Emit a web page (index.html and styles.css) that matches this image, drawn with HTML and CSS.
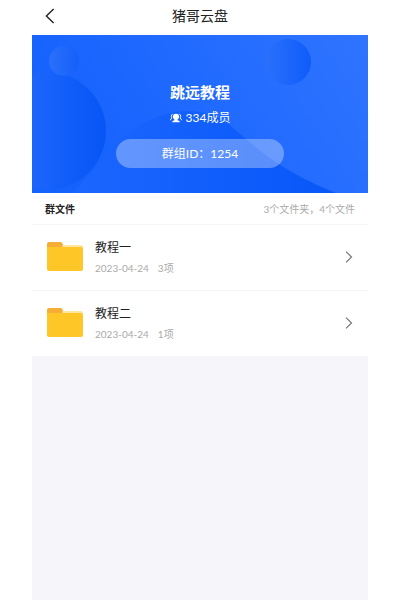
FILE: index.html
```html
<!DOCTYPE html>
<html lang="zh-CN">
<head>
<meta charset="utf-8">
<meta name="viewport" content="width=device-width, initial-scale=1">
<title>猪哥云盘</title>
<link rel="stylesheet" href="styles.css">
</head>
<body>
<div class="app">
  <header class="topbar">
    <button class="back" type="button" aria-label="返回">
      <svg width="10" height="16" viewBox="0 0 10 16" fill="none" stroke="#222" stroke-width="1.4"><path d="M8.6 1 1.4 8l7.2 7"/></svg>
    </button>
    <h1 class="title">猪哥云盘</h1>
  </header>
  <section class="banner">
    <svg class="art" viewBox="0 0 336 158" preserveAspectRatio="none" aria-hidden="true">
      <defs>
        <linearGradient id="base" x1="0" x2="1" y1="0.3" y2="0"><stop offset="0" stop-color="#1562fd"/><stop offset="0.5" stop-color="#226bff"/><stop offset="1" stop-color="#2f74ff"/></linearGradient>
        <linearGradient id="hill" x1="0" x2="1"><stop offset="0" stop-color="#1b66fe"/><stop offset="0.3" stop-color="#1762fd"/><stop offset="0.6" stop-color="#0f5dfb"/><stop offset="1" stop-color="#0a57f8"/></linearGradient>
        <linearGradient id="big" x1="0" x2="1"><stop offset="0.25" stop-color="#2069fc"/><stop offset="0.7" stop-color="#115df9"/><stop offset="1" stop-color="#0855f6"/></linearGradient>
        <linearGradient id="small" x1="0" x2="1"><stop offset="0" stop-color="#2a70fb"/><stop offset="1" stop-color="#1560fa"/></linearGradient>
        <linearGradient id="right" x1="0" x2="1"><stop offset="0" stop-color="#2a70fc"/><stop offset="1" stop-color="#0f5cfa"/></linearGradient>
      </defs>
      <rect width="336" height="158" fill="url(#base)"/>
      <path d="M40 158C60 140 78 108 110 89C140 71 176 72 198 90C224 113 248 136 304 158Z" fill="url(#hill)"/>
      <circle cx="15" cy="96" r="59" fill="url(#big)"/>
      <circle cx="32" cy="26" r="15" fill="url(#small)"/>
      <circle cx="256" cy="27" r="23" fill="url(#right)"/>
    </svg>
    <h2 class="group">跳远教程</h2>
    <p class="members">
      <svg width="12" height="10" viewBox="0 0 12 10" fill="#fff" aria-hidden="true"><path d="M6 .8c2.200 0 3.100 1.200 3.100 2.700 0 1.300-.6 2.200-1.500 2.900v.8l1.700.8q.5.300.5 1.200H2.200q0-.9.5-1.200l1.700-.8v-.8C3.500 5.700 2.900 4.800 2.900 3.500 2.900 2 3.800.8 6 .8z"/><path d="M2.700 1.200Q1.200 1.500 1.300 3.300q.1 1 .7 1.700L.6 6.200v1M9.300 1.200q1.500.3 1.400 2.100-.1 1-.7 1.700l1.400 1.200v1" fill="none" stroke="#fff" stroke-width=".9"/></svg>
      <span>334成员</span>
    </p>
    <p class="pill">群组ID：1254</p>
  </section>
  <main class="files">
    <div class="summary">
      <h3 class="label">群文件</h3>
      <span class="count">3个文件夹，4个文件</span>
    </div>
    <ul class="list">
      <li>
        <a class="row" href="#course-1">
          <svg class="folder" width="36" height="29" viewBox="0 0 36 29" aria-hidden="true"><path d="M0 2Q0 0 2 0H13.500Q15 0 15.500 1.500L17 5V12H0z" fill="#f5ae35"/><path d="M15.500 3H34Q36 3 36 5V9H15z" fill="#ffe6a0"/><path d="M0 5H34Q36 5 36 7V27Q36 29 34 29H2Q0 29 0 27z" fill="#ffc627"/></svg>
          <span class="info"><span class="name">教程一</span><span class="meta"><span>2023-04-24</span><span>3项</span></span></span>
          <svg class="chevron" width="8" height="12" viewBox="0 0 8 12" fill="none" stroke="#777" stroke-width="1.200" aria-hidden="true"><path d="M1 .6 6.500 6 1 11.400"/></svg>
        </a>
      </li>
      <li>
        <a class="row" href="#course-2">
          <svg class="folder" width="36" height="29" viewBox="0 0 36 29" aria-hidden="true"><path d="M0 2Q0 0 2 0H13.500Q15 0 15.500 1.500L17 5V12H0z" fill="#f5ae35"/><path d="M15.500 3H34Q36 3 36 5V9H15z" fill="#ffe6a0"/><path d="M0 5H34Q36 5 36 7V27Q36 29 34 29H2Q0 29 0 27z" fill="#ffc627"/></svg>
          <span class="info"><span class="name">教程二</span><span class="meta"><span>2023-04-24</span><span>1项</span></span></span>
          <svg class="chevron" width="8" height="12" viewBox="0 0 8 12" fill="none" stroke="#777" stroke-width="1.200" aria-hidden="true"><path d="M1 .6 6.500 6 1 11.400"/></svg>
        </a>
      </li>
    </ul>
  </main>
</div>
</body>
</html>
```
FILE: styles.css
```css
* {
  box-sizing: border-box;
}

body {
  margin: 0;
  background: #fff;
  color: #222;
  font-family: Lato, "Noto Sans CJK SC", sans-serif;
}

h1, h2, h3, p, ul {
  margin: 0;
  padding: 0;
}

.app {
  min-height: 100vh;
  margin: 0 8%;
  background: #f6f6fa;
}

.topbar {
  display: grid;
  grid-template-columns: 36px 1fr 36px;
  align-items: center;
  padding-bottom: 3px;
  height: 35px;
  background: #fff;
}

.back {
  display: flex;
  justify-content: center;
  padding: 0;
  border: 0;
  background: none;
}

.title {
  font-size: 14px;
  font-weight: 400;
  line-height: 20px;
  text-align: center;
}

.banner {
  position: relative;
  display: flex;
  flex-direction: column;
  align-items: center;
  padding: 46px 0 25px;
  color: #fff;
}

.art {
  position: absolute;
  inset: 0;
  width: 100%;
  height: 100%;
}

.group, .members, .pill {
  position: relative;
}

.group {
  font-size: 15px;
  font-weight: 700;
  line-height: 22px;
}

.members {
  display: flex;
  align-items: center;
  gap: 4px;
  margin: 6px 0 12px;
  font-size: 12px;
  line-height: 18px;
}

.pill {
  width: 50%;
  border-radius: 15px;
  background: rgba(255, 255, 255, 0.32);
  font-size: 12px;
  line-height: 29px;
  text-align: center;
}

.files {
  background: #fff;
}

.summary {
  display: flex;
  align-items: center;
  justify-content: space-between;
  height: 31px;
  padding: 0 13px;
  font-size: 10px;
}

.label {
  font-size: 10px;
  font-weight: 700;
}

.count, .meta {
  color: #aaa;
}

.list {
  list-style: none;
}

.row {
  display: flex;
  align-items: center;
  gap: 12px;
  height: 66px;
  padding: 0 15px;
  border-top: 1px solid #f4f4f6;
  color: inherit;
  text-decoration: none;
}

.folder, .chevron {
  margin-bottom: 2px;
}

.info {
  display: flex;
  flex: 1;
  flex-direction: column;
  gap: 3px;
}

.name {
  font-size: 12px;
  line-height: 18px;
}

.meta {
  display: flex;
  gap: 9px;
  font-size: 10px;
  line-height: 16px;
}
```
